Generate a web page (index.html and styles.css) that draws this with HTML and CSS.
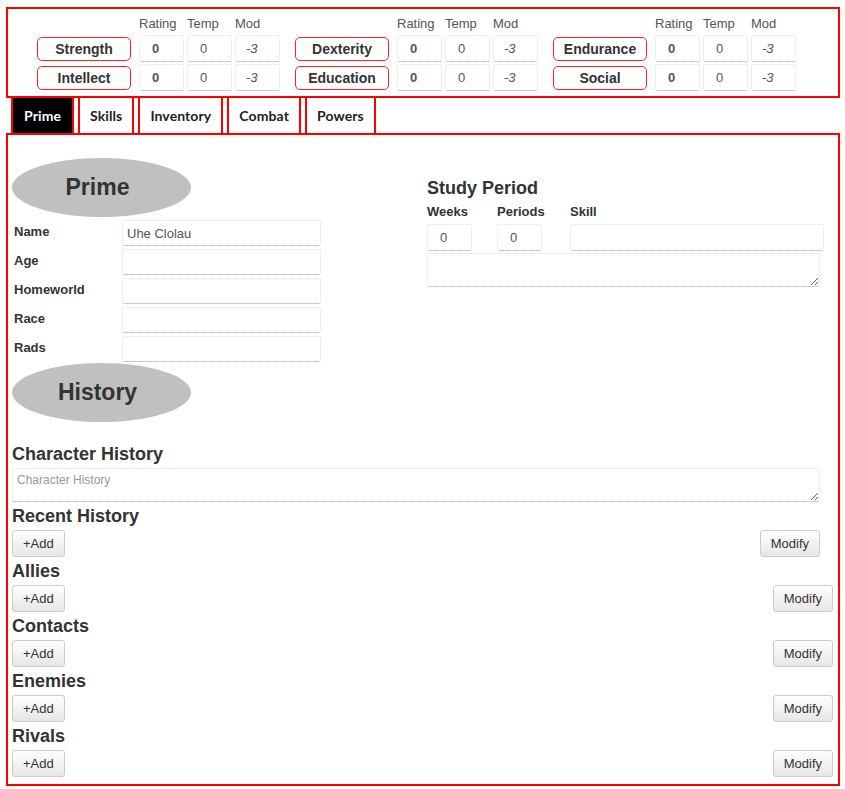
FILE: index.html
```html
<!DOCTYPE html>
<html>
<head>
<meta charset="utf-8">
<link rel="stylesheet" href="styles.css">
</head>
<body>
<div class="sheet">
  <div class="attrs">
    <div class="group">
      <span></span><span class="hdr">Rating</span><span class="hdr">Temp</span><span class="hdr">Mod</span>
      <button class="attr">Strength</button><input class="num rating" value="0"><input class="num" value="0"><input class="num mod" value="-3">
      <button class="attr">Intellect</button><input class="num rating" value="0"><input class="num" value="0"><input class="num mod" value="-3">
    </div>
    <div class="group">
      <span></span><span class="hdr">Rating</span><span class="hdr">Temp</span><span class="hdr">Mod</span>
      <button class="attr">Dexterity</button><input class="num rating" value="0"><input class="num" value="0"><input class="num mod" value="-3">
      <button class="attr">Education</button><input class="num rating" value="0"><input class="num" value="0"><input class="num mod" value="-3">
    </div>
    <div class="group">
      <span></span><span class="hdr">Rating</span><span class="hdr">Temp</span><span class="hdr">Mod</span>
      <button class="attr">Endurance</button><input class="num rating" value="0"><input class="num" value="0"><input class="num mod" value="-3">
      <button class="attr">Social</button><input class="num rating" value="0"><input class="num" value="0"><input class="num mod" value="-3">
    </div>
  </div>

  <nav class="tabs">
    <span class="tab active">Prime</span>
    <span class="tab">Skills</span>
    <span class="tab">Inventory</span>
    <span class="tab">Combat</span>
    <span class="tab">Powers</span>
  </nav>

  <div class="panel">
    <div class="cols">
      <div class="left">
        <div class="oval">Prime</div>
        <div class="frow"><label>Name</label><input class="text" value="Uhe Clolau"></div>
        <div class="frow"><label>Age</label><input class="text"></div>
        <div class="frow"><label>Homeworld</label><input class="text"></div>
        <div class="frow"><label>Race</label><input class="text"></div>
        <div class="frow"><label>Rads</label><input class="text"></div>
        <div class="oval oval-history">History</div>
      </div>
      <div class="right">
        <h3 class="sec">Study Period</h3>
        <div class="study">
          <label>Weeks</label><label>Periods</label><label>Skill</label>
          <input class="num study-num" value="0"><input class="num study-num" value="0"><input class="text skill">
        </div>
        <textarea class="study-notes"></textarea>
      </div>
    </div>

    <h3 class="sec char">Character History</h3>
    <textarea class="char-notes" placeholder="Character History"></textarea>

    <h3 class="sec">Recent History</h3>
    <div class="btnrow narrow"><button class="btn">+Add</button><button class="btn">Modify</button></div>
    <h3 class="sec">Allies</h3>
    <div class="btnrow"><button class="btn">+Add</button><button class="btn">Modify</button></div>
    <h3 class="sec">Contacts</h3>
    <div class="btnrow"><button class="btn">+Add</button><button class="btn">Modify</button></div>
    <h3 class="sec">Enemies</h3>
    <div class="btnrow"><button class="btn">+Add</button><button class="btn">Modify</button></div>
    <h3 class="sec">Rivals</h3>
    <div class="btnrow last"><button class="btn">+Add</button><button class="btn">Modify</button></div>
  </div>
</div>
</body>
</html>
```

FILE: styles.css
```css
* { box-sizing: border-box; }
html, body { margin: 0; padding: 0; background: #fff; }
body { font-family: "Liberation Sans", Arial, sans-serif; font-size: 13px; color: #333; }

.sheet { padding: 7px 0 0 6px; width: 840px; }

/* attribute box */
.attrs {
  border: 2px solid #f00;
  height: 91px;
  padding: 6px 0 0 29px;
  display: flex;
  gap: 15px;
}
.group {
  display: grid;
  grid-template-columns: 99px 45px 45px 45px;
  grid-template-rows: 18px 27px 27px;
  column-gap: 3px;
  row-gap: 2px;
}
.hdr { font-size: 13px; line-height: 17px; color: #555; }
.attr {
  width: 94px; height: 24px; align-self: center;
  border: 1px solid #f22; border-radius: 5px; background: #fff;
  font: bold 14px "Liberation Sans", Arial, sans-serif; color: #333; padding: 0;
}
.num {
  width: 45px; height: 27px;
  border: 1px solid #eee; border-bottom: 1px dotted #999; border-radius: 2px;
  padding: 0 0 0 12px; margin: 0;
  font: 13px "Liberation Sans", Arial, sans-serif; color: #555; background: #fff;
}
.num.rating { font-weight: bold; }
.num.mod { font-style: italic; padding-left: 10px; }

/* tabs */
.tabs { display: flex; gap: 4px; margin-top: -2px; padding-left: 5px; height: 39px; position: relative; z-index: 1; }
.tab {
  border: 2px solid #f00; height: 39px; padding: 0 10px;
  display: flex; align-items: center;
  font: bold 14px Lato, "Liberation Sans", sans-serif; letter-spacing: 0.1px; color: #222; background: #fff;
}
.tab.active { background: #000; color: #fff; padding: 0 11px; }

/* panel */
.panel { border: 2px solid #f00; margin-top: -2px; padding: 0 5px 4px 4px; }
.cols { display: flex; }
.left { width: 415px; padding-top: 23px; }
.right { flex: 1; padding-top: 42px; }

.oval {
  width: 179px; height: 59px; border-radius: 50%; background: #c0c0c0;
  display: flex; align-items: center; justify-content: center;
  font: bold 23px "Liberation Sans", Arial, sans-serif; color: #333;
  margin-bottom: 3px; padding-right: 8px;
}
.oval-history { margin-top: -2px; margin-bottom: 0; }

.frow { display: flex; align-items: flex-start; height: 26px; margin-bottom: 3px; }
.frow label { width: 110px; padding: 4px 0 0 2px; line-height: 15px; font-weight: bold; font-size: 13px; color: #333; }
.text {
  width: 199px; height: 26px;
  border: 1px solid #eee; border-bottom: 1px dotted #999; border-radius: 2px;
  padding: 0 4px; margin: 0;
  font: 13px "Liberation Sans", Arial, sans-serif; color: #555; background: #fff;
}

.sec { margin: 0; font-size: 18px; line-height: 22px; font-weight: bold; color: #333; }
.study {
  display: grid;
  grid-template-columns: 70px 73px 254px;
  grid-template-rows: 16px 27px;
  row-gap: 4px;
  margin-top: 5px;
}
.study label { font-weight: bold; font-size: 13px; line-height: 16px; color: #333; }
.study-num { padding-left: 12px; }
.skill { width: 254px; height: 27px; }
.study-notes {
  display: block; width: 393px; height: 34px; margin-top: 2px;
  border: 1px solid #eee; border-bottom: 1px dotted #999; border-radius: 2px;
  resize: vertical;
}

.char { margin-top: 21px; }
.char-notes {
  display: block; width: 808px; height: 34px; margin: 3px 0 3px 0;
  border: 1px solid #eee; border-bottom: 1px dotted #999; border-radius: 2px;
  padding: 4px 4px; font: 12px "Liberation Sans", Arial, sans-serif; color: #555;
}
.char-notes::placeholder { color: #999; }

.btnrow { display: flex; justify-content: space-between; margin: 3px 0; }
.btnrow.narrow { width: 808px; }
.btn {
  height: 27px; padding: 0 10px;
  border: 1px solid #ccc; border-radius: 3px;
  background: linear-gradient(#ffffff, #e6e6e6);
  font: 13px "Liberation Sans", Arial, sans-serif; color: #333;
}
```
